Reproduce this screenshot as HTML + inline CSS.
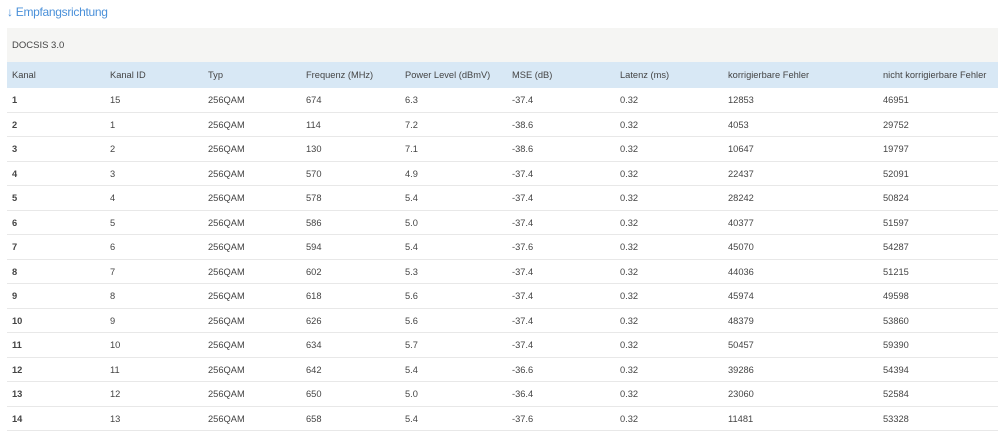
<!DOCTYPE html><html><head><style>
body{margin:0;background:#fff;font-family:"Liberation Sans",sans-serif;color:#444;width:998px;height:430px;overflow:hidden;position:relative}
.t{position:absolute;left:7px;top:5px;font-size:12px;color:#4a90d9;letter-spacing:-0.3px}
.band{position:absolute;left:7px;top:28px;width:991px;height:34px;background:#f5f5f3}
.band span{position:absolute;left:5px;top:12px;font-size:9.5px;color:#444}
.hd{position:absolute;left:7px;top:62px;width:991px;height:26px;background:#d8e8f5}
.r{position:absolute;left:7px;width:991px;height:24.5px;border-bottom:1px solid #e8e8e8;box-sizing:border-box}
.c{position:absolute;font-size:9.3px;line-height:1;white-space:nowrap}
</style></head><body>
<div class="t">↓ Empfangsrichtung</div>
<div class="band"><span>DOCSIS 3.0</span></div>
<div id="w"></div>
<script>
var xs=[5,103,201,299,398,505,613,721,876];
var h=["Kanal","Kanal ID","Typ","Frequenz (MHz)","Power Level (dBmV)","MSE (dB)","Latenz (ms)","korrigierbare Fehler","nicht korrigierbare Fehler"];
var d=[[1,15,674,"6.3","-37.4",12853,46951],[2,1,114,"7.2","-38.6",4053,29752],[3,2,130,"7.1","-38.6",10647,19797],[4,3,570,"4.9","-37.4",22437,52091],[5,4,578,"5.4","-37.4",28242,50824],[6,5,586,"5.0","-37.4",40377,51597],[7,6,594,"5.4","-37.6",45070,54287],[8,7,602,"5.3","-37.4",44036,51215],[9,8,618,"5.6","-37.4",45974,49598],[10,9,626,"5.6","-37.4",48379,53860],[11,10,634,"5.7","-37.4",50457,59390],[12,11,642,"5.4","-36.6",39286,54394],[13,12,650,"5.0","-36.4",23060,52584],[14,13,658,"5.4","-37.6",11481,53328]];
var s='<div class="hd">';h.forEach(function(t,i){s+='<div class="c" style="left:'+xs[i]+'px;top:9px">'+t+'</div>'});s+='</div>';
d.forEach(function(r,j){var v=[r[0],r[1],"256QAM",r[2],r[3],r[4],"0.32",r[5],r[6]];s+='<div class="r" style="top:'+(88+j*24.5)+'px">';v.forEach(function(t,i){s+='<div class="c" style="left:'+xs[i]+'px;top:8px'+(i==0?';font-weight:bold':'')+'">'+t+'</div>'});s+='</div>'});
document.getElementById('w').innerHTML=s;
</script>
</body></html>
